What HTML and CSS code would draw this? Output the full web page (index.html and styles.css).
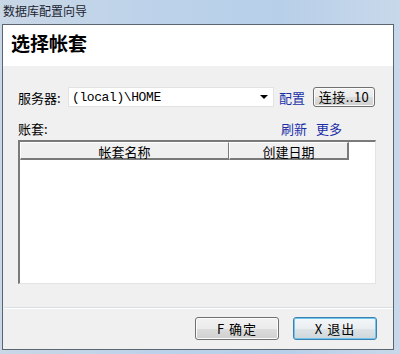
FILE: index.html
```html
<!DOCTYPE html>
<html lang="zh-CN">
<head>
	<meta charset="UTF-8">
	<title>数据库配置向导</title>
	<link rel="stylesheet" href="styles.css">
</head>
<body>
	<div class="titlebar">数据库配置向导</div>
	<div class="window">
		<div class="header">
			<h2 class="heading">选择帐套</h2>
		</div>
		<div class="content">
			<div class="server_row">
				<span class="label">服务器:</span>
				<div class="combo">
					<span class="combo_text">(local)\HOME</span>
					<span class="arrow"></span>
				</div>
				<a class="link" href="#">配置</a>
				<button class="btn connect">连接..10</button>
			</div>
			<div class="set_row">
				<span class="label">账套:</span>
				<span class="links">
					<a class="link" href="#">刷新</a>
					<a class="link" href="#">更多</a>
				</span>
			</div>
			<div class="list">
				<div class="list_head">
					<span class="col col_name">帐套名称</span>
					<span class="col col_date">创建日期</span>
				</div>
			</div>
		</div>
		<div class="footer">
			<button class="btn">F 确定</button>
			<button class="btn default">X 退出</button>
		</div>
	</div>
</body>
</html>
```
FILE: styles.css
```css
html,body{
	margin: 0;
	width: 400px;
	height: 354px;
	overflow: hidden;
}
body{
	background: linear-gradient(90deg, #c9d7e6 0%, #bcd2ea 40%, #b7cfe9 70%, #c8d8ea 100%);
	font-family: "Noto Sans CJK SC", "Noto Sans", sans-serif;
	font-size: 12px;
	color: #000;
}
.titlebar{
	height: 24px;
	line-height: 22px;
	padding-left: 3px;
	color: #1c2430;
	font-size: 12px;
}
.window{
	margin: 0 6px 0 2px;
	height: 324px;
	border: 1px solid #5a6570;
	background: #f0f0f0;
	display: flex;
	flex-direction: column;
}
.header{
	height: 41px;
	background: #fff;
	padding: 5px 0 0 8px;
	box-sizing: border-box;
}
.heading{
	margin: 0;
	font-size: 19px;
	line-height: 26px;
	font-weight: bold;
}
.content{
	padding: 21px 0 0 15px;
	flex: 1;
}
.server_row{
	display: flex;
	align-items: center;
	height: 20px;
}
.label{
	width: 50px;
	font-size: 13px;
}
.combo{
	width: 206px;
	height: 20px;
	background: #fff;
	border: 1px solid #e3e3e3;
	box-sizing: border-box;
	display: flex;
	align-items: center;
	padding: 0 5px 0 3px;
}
.combo_text{
	flex: 1;
	font-family: "Liberation Mono", monospace;
	font-size: 13px;
	letter-spacing: -0.4px;
}
.arrow{
	width: 0;
	height: 0;
	border-left: 4px solid transparent;
	border-right: 4px solid transparent;
	border-top: 4px solid #000;
}
.link{
	color: #1b2fa8;
	text-decoration: none;
	font-size: 13px;
}
.server_row .link{
	margin-left: 5px;
}
.btn{
	font-family: "Noto Sans CJK SC", "Noto Sans", sans-serif;
	font-size: 13px;
	color: #000;
	height: 22px;
	padding: 0;
	border: 1px solid #707070;
	border-radius: 3px;
	background: linear-gradient(#f2f2f2 0%, #ebebeb 50%, #dddddd 51%, #cfcfcf 100%);
	box-shadow: inset 0 0 0 1px #fcfcfc;
}
.connect{
	width: 62px;
	height: 20px;
	margin-left: 8px;
	line-height: 16px;
	letter-spacing: 0.5px;
}
.set_row{
	display: flex;
	align-items: center;
	margin-top: 13px;
	height: 17px;
}
.links{
	margin-left: 213px;
	display: flex;
	gap: 9px;
}
.list{
	margin-top: 3px;
	width: 358px;
	height: 144px;
	box-sizing: border-box;
	background: #fff;
	border-top: 2px solid #7a7a7a;
	border-left: 2px solid #7a7a7a;
	border-right: 1px solid #e3e3e3;
	border-bottom: 1px solid #e3e3e3;
}
.list_head{
	display: flex;
	height: 18px;
}
.col{
	box-sizing: border-box;
	text-align: center;
	font-size: 13px;
	line-height: 17px;
	background: #f0f0f0;
	border-top: 1px solid #fff;
	border-left: 1px solid #fff;
	border-bottom: 2px solid #7a7a7a;
	border-right: 1px solid #7a7a7a;
}
.col_name{
	width: 209px;
}
.col_date{
	width: 120px;
	border-right-width: 2px;
}
.footer{
	height: 42px;
	border-top: 1px solid #d5dfe5;
	box-shadow: inset 0 1px 0 #fff;
	display: flex;
	justify-content: flex-end;
	gap: 14px;
	padding: 9px 16px 0 0;
	box-sizing: border-box;
	margin-left: 1px;
}
.footer .btn{
	width: 84px;
	height: 23px;
	letter-spacing: 1px;
}
.default{
	border-color: #3c7fb1;
	background: linear-gradient(#f4f7f9 0%, #eaeef0 50%, #dde3e6 51%, #d0d7da 100%);
	box-shadow: inset 0 0 0 1px #6ec6ea;
}
```
